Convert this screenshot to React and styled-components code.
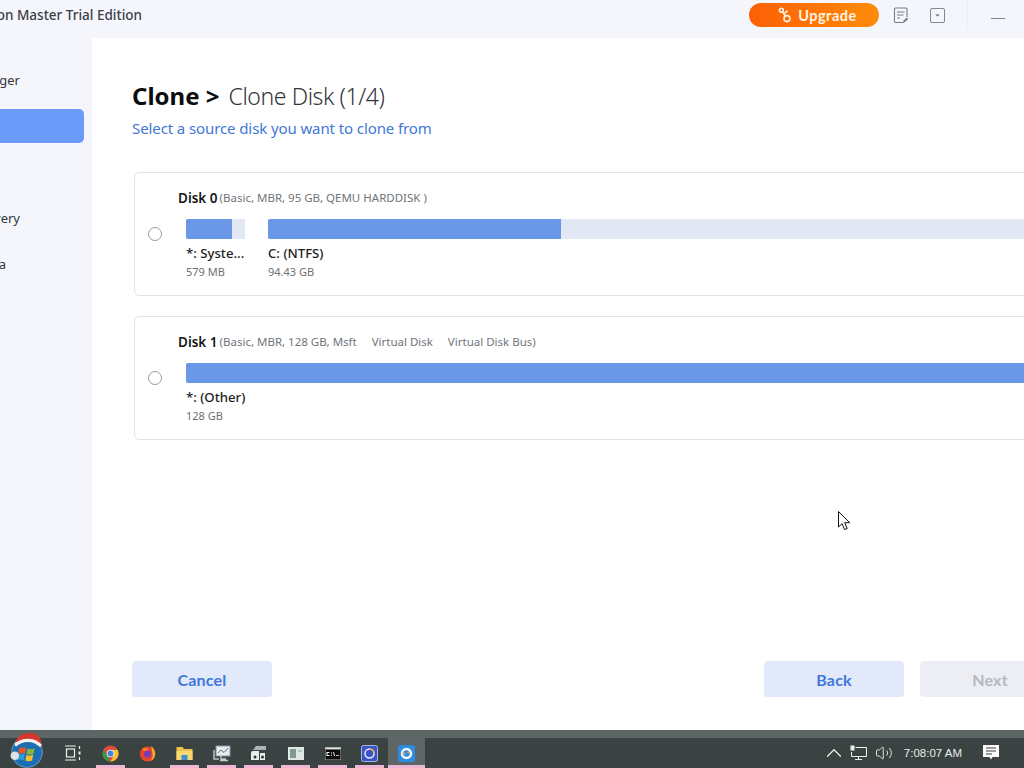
import styled, { createGlobalStyle } from "styled-components";
import { ChevronUp, Volume2 } from "lucide-react";

const GlobalStyle = createGlobalStyle`
  html, body {
    margin: 0;
    padding: 0;
    width: 1024px;
    height: 768px;
    overflow: hidden;
    background: #ffffff;
    font-family: "Noto Sans", "Open Sans", sans-serif;
  }
  * { box-sizing: border-box; }
`;

const Screen = styled.div`
  position: relative;
  width: 1024px;
  height: 768px;
  overflow: hidden;
  display: flex;
  flex-direction: column;
`;

/* the app window hangs off both sides of the desktop */
const AppWindow = styled.div`
  width: 1300px;
  height: 730px;
  margin-left: -110px;
  display: flex;
  flex-direction: column;
  background: #f4f6fb;
  flex: none;
`;

const TitleBar = styled.div`
  height: 38px;
  flex: none;
  display: flex;
  align-items: flex-start;
  width: 1115px;
`;

const AppTitle = styled.div`
  flex: 1;
  padding: 6px 607px 0 0;
  font-size: 13.5px;
  line-height: 19px;
  font-weight: 500;
  color: #3a3f49;
  white-space: nowrap;
  text-align: right;
`;

const UpgradeButton = styled.div`
  width: 130px;
  height: 24px;
  flex: none;
  margin-top: 3px;
  border-radius: 12px;
  background: linear-gradient(90deg, #fb5f06 0%, #ff7a05 60%, #fd8c0b 100%);
  color: #fff3e4;
  display: flex;
  align-items: center;
  justify-content: center;
  gap: 6px;
  font-family: Lato, sans-serif;
  font-weight: 700;
  font-size: 14.5px;
  letter-spacing: 0.5px;
  padding-left: 7px;
`;

const TitleIcon = styled.div`
  margin: ${(p) => p.$margin};
  display: flex;
  flex: none;
`;

const TitleDivider = styled.div`
  width: 1px;
  height: 30px;
  flex: none;
  background: #eceef3;
  margin-left: 22px;
`;

const Minimize = styled.div`
  width: 14px;
  height: 1px;
  flex: none;
  background: #80848c;
  margin: 18px 0 0 23px;
`;

const MainArea = styled.div`
  flex: 1;
  display: flex;
  min-height: 0;
`;

const Sidebar = styled.nav`
  width: 202px;
  flex: none;
  padding-top: 25px;
  display: flex;
  flex-direction: column;
  gap: 12px;
`;

const NavItem = styled.div`
  height: 34px;
  width: 194px;
  display: flex;
  align-items: center;
  justify-content: flex-end;
  padding-right: ${(p) => p.$right}px;
  font-size: 13px;
  color: ${(p) => (p.$active ? "#ffffff" : "#33373f")};
  background: ${(p) => (p.$active ? "#6a9bfb" : "transparent")};
  border-radius: 5px;
  white-space: nowrap;
`;

const Content = styled.main`
  flex: 1;
  background: #ffffff;
  padding: 41px 0 0 40px;
  display: flex;
  flex-direction: column;
  width: 1098px;
`;

const Heading = styled.div`
  display: flex;
  align-items: baseline;
  font-size: 23px;
  font-weight: 300;
  letter-spacing: -0.4px;
  line-height: 34px;
  color: #33363b;
`;

const HeadingStrong = styled.span`
  font-size: 24px;
  font-weight: 700;
  letter-spacing: 0;
  color: #0c0c0e;
  margin-right: 9px;
`;

const SubHeading = styled.div`
  font-size: 15px;
  letter-spacing: -0.1px;
  line-height: 22px;
  color: #3f78d8;
  margin-top: 4px;
`;

const CardList = styled.div`
  margin: 33px 0 0 2px;
  display: flex;
  flex-direction: column;
  gap: 20px;
  width: 934px;
`;

const DiskCard = styled.div`
  height: 124px;
  border: 1px solid #e2e3e6;
  border-radius: 5px;
  background: #ffffff;
  padding: 16px 0 0 43px;
`;

const DiskTitle = styled.div`
  display: flex;
  align-items: flex-start;
  height: 30px;
  gap: 2px;
  font-size: 13.5px;
  line-height: 18px;
  font-weight: 600;
  color: #15161a;
  white-space: pre;
`;

const DiskMeta = styled.span`
  font-size: 11.5px;
  line-height: 18px;
  font-weight: 400;
  color: #70747b;
`;

const DiskBody = styled.div`
  display: flex;
  align-items: flex-start;
  margin-left: -30px;
`;

const Radio = styled.span`
  width: 14px;
  height: 14px;
  flex: none;
  border: 1px solid #9a9a9a;
  border-radius: 50%;
  background: #fff;
  margin-top: 8px;
  margin-right: 24px;
`;

const Partitions = styled.div`
  flex: 1;
  display: flex;
  gap: 23px;
`;

const Partition = styled.div`
  width: ${(p) => (p.$width ? `${p.$width}px` : "auto")};
  flex: ${(p) => (p.$width ? "none" : "1")};
  min-width: 0;
`;

const Bar = styled.div`
  height: 20px;
  background: #e2e7f4;
  border-radius: 2px 0 0 2px;
`;

const BarFill = styled.div`
  height: 100%;
  background: #6b98e6;
  border-radius: 2px 0 0 2px;
`;

const PartitionName = styled.div`
  margin-top: 4px;
  font-size: 13.2px;
  font-weight: 500;
  line-height: 20px;
  color: #1c1d21;
  white-space: nowrap;
`;

const PartitionSize = styled.div`
  font-size: 11px;
  line-height: 18px;
  color: #6d7076;
`;

const Footer = styled.div`
  margin-top: auto;
  padding-bottom: 33px;
  display: flex;
  width: 928px;
`;

const FooterButton = styled.div`
  width: 140px;
  height: 36px;
  border-radius: 4px;
  display: flex;
  align-items: center;
  justify-content: center;
  font-family: Lato, sans-serif;
  font-size: 16px;
  font-weight: 700;
  letter-spacing: 0.2px;
  margin-left: ${(p) => p.$left || 0}px;
  color: ${(p) => (p.$disabled ? "#b4b8bf" : "#3f78d8")};
  background: ${(p) => (p.$disabled ? "#eceef3" : "#e1e9fa")};
`;

const ScrollStrip = styled.div`
  height: 8px;
  flex: none;
  background: #5d6664;
`;

const TaskBar = styled.div`
  height: 30px;
  flex: none;
  display: flex;
  align-items: center;
  background: #3a4341;
  color: #f2f4f3;
`;

const StartOrb = styled.div`
  width: 54px;
  height: 30px;
  flex: none;
  display: flex;
  align-items: flex-end;
  justify-content: center;
`;

const TaskIcon = styled.div`
  width: 37px;
  height: 30px;
  flex: none;
  display: flex;
  align-items: center;
  justify-content: center;
  position: relative;
  margin-left: ${(p) => p.$left || 0}px;
  background: ${(p) => (p.$active ? "#5d6664" : "transparent")};
  &::after {
    content: "";
    display: ${(p) => (p.$open ? "block" : "none")};
    position: absolute;
    left: ${(p) => (p.$active ? 0 : 4)}px;
    right: ${(p) => (p.$active ? 0 : 4)}px;
    bottom: 0;
    height: 3px;
    background: #f0b6d3;
  }
`;

const Tray = styled.div`
  margin-left: auto;
  display: flex;
  align-items: center;
`;

const Clock = styled.div`
  font-family: "Liberation Sans", sans-serif;
  font-size: 11.5px;
  color: #e8eceb;
  margin: 0 21px 0 11px;
  white-space: nowrap;
`;

const TrayIcon = styled.div`
  display: flex;
  margin-right: ${(p) => p.$right || 0}px;
`;

const KeyIcon = () => (
  <svg width="14" height="16" viewBox="0 0 14 16" fill="none" stroke="#fff3e4" strokeWidth="1.6">
    <circle cx="3.4" cy="3.2" r="1.9" />
    <circle cx="9" cy="11.6" r="3" />
    <path d="M4.6 4.8 7.4 9M6.6 6 9.6 4" />
  </svg>
);

const NotesIcon = () => (
  <svg width="16" height="17" viewBox="0 0 16 17" fill="none" stroke="#787c84" strokeWidth="1.1">
    <path d="M10.5 15.5H2.6q-1.1 0-1.1-1.1V2.1q0-1.1 1.1-1.1h10.3q1.1 0 1.1 1.1v8" />
    <path d="M4 5h7.5M4 8h6.5M4 11h3" />
    <path d="m10 15.8.6-2.2 3.2-3 1.4 1.4-3.2 3z" fill="#787c84" stroke="none" />
  </svg>
);

const DropIcon = () => (
  <svg width="15" height="15" viewBox="0 0 15 15" fill="none">
    <rect x=".5" y=".5" width="14" height="14" rx="1.5" stroke="#83878e" />
    <path d="M5.4 6.4h4.2L7.5 8.6z" fill="#5c6068" />
  </svg>
);

const StartIcon = () => (
  <svg width="38" height="36" viewBox="4 2 32 34" style={{ flex: "none" }}>
    <circle cx="20" cy="21" r="14.5" fill="#1c6fb4" />
    <circle cx="20" cy="21" r="14.5" fill="none" stroke="#9fc7e3" strokeOpacity=".5" />
    <path d="M12.5 17.5q3.5-1.7 6.7-.2l-1 5.2q-3.200-1.400-6.800.2z" fill="#e8572c" />
    <path d="M20.500 17.500q3.200 1.500 6.600-.1l-1 5.300q-3.300 1.500-6.600.1z" fill="#8ab936" />
    <path d="M11.500 23.500q3.600-1.600 6.500-.2l-1 5.200q-3.100-1.300-6.600.200z" fill="#2d9ae0" />
    <path d="M19.400 23.700q3.200 1.400 6.400-.1l-1 5.200q-3.200 1.400-6.400.1z" fill="#f6be2c" />
    <path d="M9 12q3-8.500 12-9 7.500-.2 11 4l2.500 8q-5.500-5.500-13-5.500Q14 9.500 9 12z" fill="#d5362f" />
    <path d="M8 13q6-5 13.500-4.700Q29 8.500 34 14l-1.500 2.500Q27 11.500 21 11.500 14 11.500 9.500 16z" fill="#f5f2ee" />
    <circle cx="8.500" cy="24.500" r="4" fill="#dfe3e6" />
  </svg>
);

const TaskViewIcon = () => (
  <svg width="18" height="16" viewBox="0 0 18 16" fill="none" stroke="#eef1f0" strokeWidth="1.2">
    <path d="M1 1h11M1 15h11" />
    <rect x="2.500" y="4" width="8" height="8" />
    <path d="M15.500 1v3M15.500 12v3" />
    <rect x="14.500" y="6.500" width="2" height="3" fill="#eef1f0" stroke="none" />
  </svg>
);

const ChromeIcon = () => (
  <svg width="17" height="17" viewBox="0 0 17 17">
    <circle cx="8.500" cy="8.500" r="8" fill="#dd4c3d" />
    <path d="M1.500 4.700 5 10.800l3.500 5.700a8 8 0 0 1-7-11.800z" fill="#2f9d4e" />
    <path d="M8.500 16.500 12 10.500 8.500 5h7.300a8 8 0 0 1-7.300 11.500z" fill="#f5c32e" />
    <circle cx="8.500" cy="8.500" r="3.800" fill="#f3f3f3" />
    <circle cx="8.500" cy="8.500" r="2.900" fill="#3f82d8" />
  </svg>
);

const FirefoxIcon = () => (
  <svg width="17" height="17" viewBox="0 0 17 17">
    <circle cx="8.300" cy="9" r="7.500" fill="#e8462c" />
    <path d="M12 1q4.500 3.500 4.300 8.500Q15.500 15 10 16.300q4-2 3.700-6.300Q13.300 5 12 1z" fill="#fcae2c" />
    <circle cx="8.500" cy="9" r="3.600" fill="#7a3db0" />
    <path d="M3 4q4-1.500 7 .5Q7.500 4.500 6 6z" fill="#ff8a2c" />
  </svg>
);

const FolderIcon = () => (
  <svg width="17" height="15" viewBox="0 0 17 15">
    <path d="M.5 1h6l1.500 2H16.500v11H.5z" fill="#f0c14b" />
    <path d="M.5 5h16v9H.5z" fill="#f8d873" />
    <rect x="5.500" y="9" width="6" height="5" fill="#3c8fd0" />
  </svg>
);

const MonitorIcon = () => (
  <svg width="18" height="17" viewBox="0 0 18 17" fill="none">
    <rect x="3" y="1" width="14" height="10" fill="#e6edf0" stroke="#8b9498" />
    <path d="m5 8 3-3 3 2.500L15 3" stroke="#51707e" />
    <path d="M1 5v9h5" stroke="#b8c2c6" strokeWidth="1.500" />
    <path d="M8 11v3h5M7 15.500h8" stroke="#c4cdd0" strokeWidth="1.300" />
  </svg>
);

const DriveIcon = () => (
  <svg width="17" height="16" viewBox="0 0 17 16">
    <path d="M3 5 6 1h10v4z" fill="#aeb4b4" />
    <path d="M1 8q0-2 2-2h6v9H1z" fill="#e9ecec" />
    <path d="M10 8h5v7h-5z" fill="#e9ecec" />
    <circle cx="5" cy="12" r="1.500" fill="#2f3433" />
    <circle cx="12.500" cy="12" r="1.500" fill="#2f3433" />
  </svg>
);

const PanelIcon = () => (
  <svg width="16" height="13" viewBox="0 0 16 13">
    <rect width="16" height="13" fill="#dfe8e4" />
    <rect x="2" y="2" width="6" height="9" fill="#7f9a92" />
    <rect x="10" y="3" width="4" height="2" fill="#b5c4bf" />
  </svg>
);

const ConsoleIcon = () => (
  <svg width="16" height="13" viewBox="0 0 16 13">
    <rect width="16" height="13" fill="#0c0c0c" stroke="#d8dcdb" strokeWidth=".8" />
    <rect x=".4" y=".4" width="15.200" height="2" fill="#e5e7e6" />
    <path d="M2.500 5h2v.9h-2v2.200h2V9h-3V5zM6 5.500h1v1H6zM6 7.800h1v1H6zM9 5l1 4h-.9l-1-4zM11 8.200h3V9h-3z" fill="#fff" />
  </svg>
);

const CircleAppIcon = () => (
  <svg width="17" height="17" viewBox="0 0 17 17" fill="none">
    <rect x=".5" y=".5" width="16" height="16" rx="2" fill="#3b54c4" stroke="#aab6ea" />
    <circle cx="8.500" cy="8.500" r="4.500" stroke="#e8ecff" strokeWidth="1.500" />
    <path d="M8.500 4a4.500 4.500 0 0 1 4.500 4.500" stroke="#f0a25a" strokeWidth="1.500" />
  </svg>
);

const CloneAppIcon = () => (
  <svg width="17" height="17" viewBox="0 0 17 17" fill="none">
    <rect width="17" height="17" rx="3" fill="#2d8be0" />
    <circle cx="8.500" cy="8.500" r="4.500" stroke="#f6fbff" strokeWidth="2.400" />
    <path d="M4 8.500h5l2-2" stroke="#f0a25a" strokeWidth="1.400" />
    <circle cx="8.500" cy="8.500" r="1.300" fill="#2d8be0" />
  </svg>
);

const NetworkIcon = () => (
  <svg width="17" height="16" viewBox="0 0 17 16" fill="none" stroke="#eef1f0">
    <path d="M5.500 2.500h11v9h-15V7" />
    <path d="M8.500 11.500v3M5 14.500h7" />
    <rect x=".5" y=".5" width="4" height="5" fill="#eef1f0" stroke="none" />
  </svg>
);

const NotifyIcon = () => (
  <svg width="16" height="16" viewBox="0 0 16 16">
    <path d="M0 0h16v12H9.500L8 14.500 6.500 12H0z" fill="#fafbfa" />
    <path d="M3 3h10M3 6h10M3 9h6" stroke="#3a4341" />
  </svg>
);

const CursorIcon = styled.svg`
  position: absolute;
  left: 838px;
  top: 511px;
`;

const navItems = [
  { name: "Partition Manager", right: 64 },
  { name: "Clone", right: 100, active: true },
  { name: "Migrate OS", right: 84 },
  { name: "Partition Recovery", right: 64 },
  { name: "Wipe Data", right: 78 },
];

const taskIcons = [
  { icon: TaskViewIcon },
  { icon: ChromeIcon, open: true, left: 1 },
  { icon: FirefoxIcon },
  { icon: FolderIcon, open: true },
  { icon: MonitorIcon, open: true },
  { icon: DriveIcon, open: true },
  { icon: PanelIcon, open: true },
  { icon: ConsoleIcon, open: true },
  { icon: CircleAppIcon, open: true },
  { icon: CloneAppIcon, open: true, active: true },
];

export default function App() {
  return (
    <Screen>
      <GlobalStyle />
      <AppWindow>
        <TitleBar>
          <AppTitle>Partition Master Trial Edition</AppTitle>
          <UpgradeButton>
            <KeyIcon />
            Upgrade
          </UpgradeButton>
          <TitleIcon $margin="7px 0 0 14px"><NotesIcon /></TitleIcon>
          <TitleIcon $margin="8px 0 0 21px"><DropIcon /></TitleIcon>
          <TitleDivider />
          <Minimize />
        </TitleBar>
        <MainArea>
          <Sidebar>
            {navItems.map((item) => (
              <NavItem key={item.name} $active={item.active} $right={item.right}>{item.name}</NavItem>
            ))}
          </Sidebar>
          <Content>
            <Heading>
              <HeadingStrong>Clone &gt;</HeadingStrong>
              Clone Disk (1/4)
            </Heading>
            <SubHeading>Select a source disk you want to clone from</SubHeading>
            <CardList>
              <DiskCard>
                <DiskTitle>
                  Disk 0<DiskMeta>(Basic, MBR, 95 GB, QEMU HARDDISK )</DiskMeta>
                </DiskTitle>
                <DiskBody>
                  <Radio />
                  <Partitions>
                    <Partition $width={59}>
                      <Bar><BarFill style={{ width: "78%" }} /></Bar>
                      <PartitionName>*: Syste...</PartitionName>
                      <PartitionSize>579 MB</PartitionSize>
                    </Partition>
                    <Partition>
                      <Bar><BarFill style={{ width: "36.7%" }} /></Bar>
                      <PartitionName>C: (NTFS)</PartitionName>
                      <PartitionSize>94.43 GB</PartitionSize>
                    </Partition>
                  </Partitions>
                </DiskBody>
              </DiskCard>
              <DiskCard>
                <DiskTitle>
                  Disk 1<DiskMeta>(Basic, MBR, 128 GB, Msft     Virtual Disk     Virtual Disk Bus)</DiskMeta>
                </DiskTitle>
                <DiskBody>
                  <Radio />
                  <Partitions>
                    <Partition>
                      <Bar><BarFill style={{ width: "100%" }} /></Bar>
                      <PartitionName>*: (Other)</PartitionName>
                      <PartitionSize>128 GB</PartitionSize>
                    </Partition>
                  </Partitions>
                </DiskBody>
              </DiskCard>
            </CardList>
            <Footer>
              <FooterButton>Cancel</FooterButton>
              <FooterButton $left={492}>Back</FooterButton>
              <FooterButton $left={16} $disabled>Next</FooterButton>
            </Footer>
          </Content>
        </MainArea>
      </AppWindow>
      <ScrollStrip />
      <TaskBar>
        <StartOrb><StartIcon /></StartOrb>
        {taskIcons.map((t, i) => (
          <TaskIcon key={i} $open={t.open} $active={t.active} $left={t.left}><t.icon /></TaskIcon>
        ))}
        <Tray>
          <TrayIcon $right={3}><ChevronUp size={26} color="#eef1f0" strokeWidth={1.1} /></TrayIcon>
          <TrayIcon $right={8}><NetworkIcon /></TrayIcon>
          <TrayIcon><Volume2 size={18} color="#eef1f0" strokeWidth={1.2} /></TrayIcon>
          <Clock>7:08:07 AM</Clock>
          <TrayIcon $right={25}><NotifyIcon /></TrayIcon>
        </Tray>
      </TaskBar>
      <CursorIcon width="13" height="20" viewBox="0 0 13 20">
        <path d="M.5.5v15.500l3.600-3.400 2.400 5.900 2.700-1.100-2.500-5.700h5z" fill="#fff" stroke="#111" />
      </CursorIcon>
    </Screen>
  );
}
